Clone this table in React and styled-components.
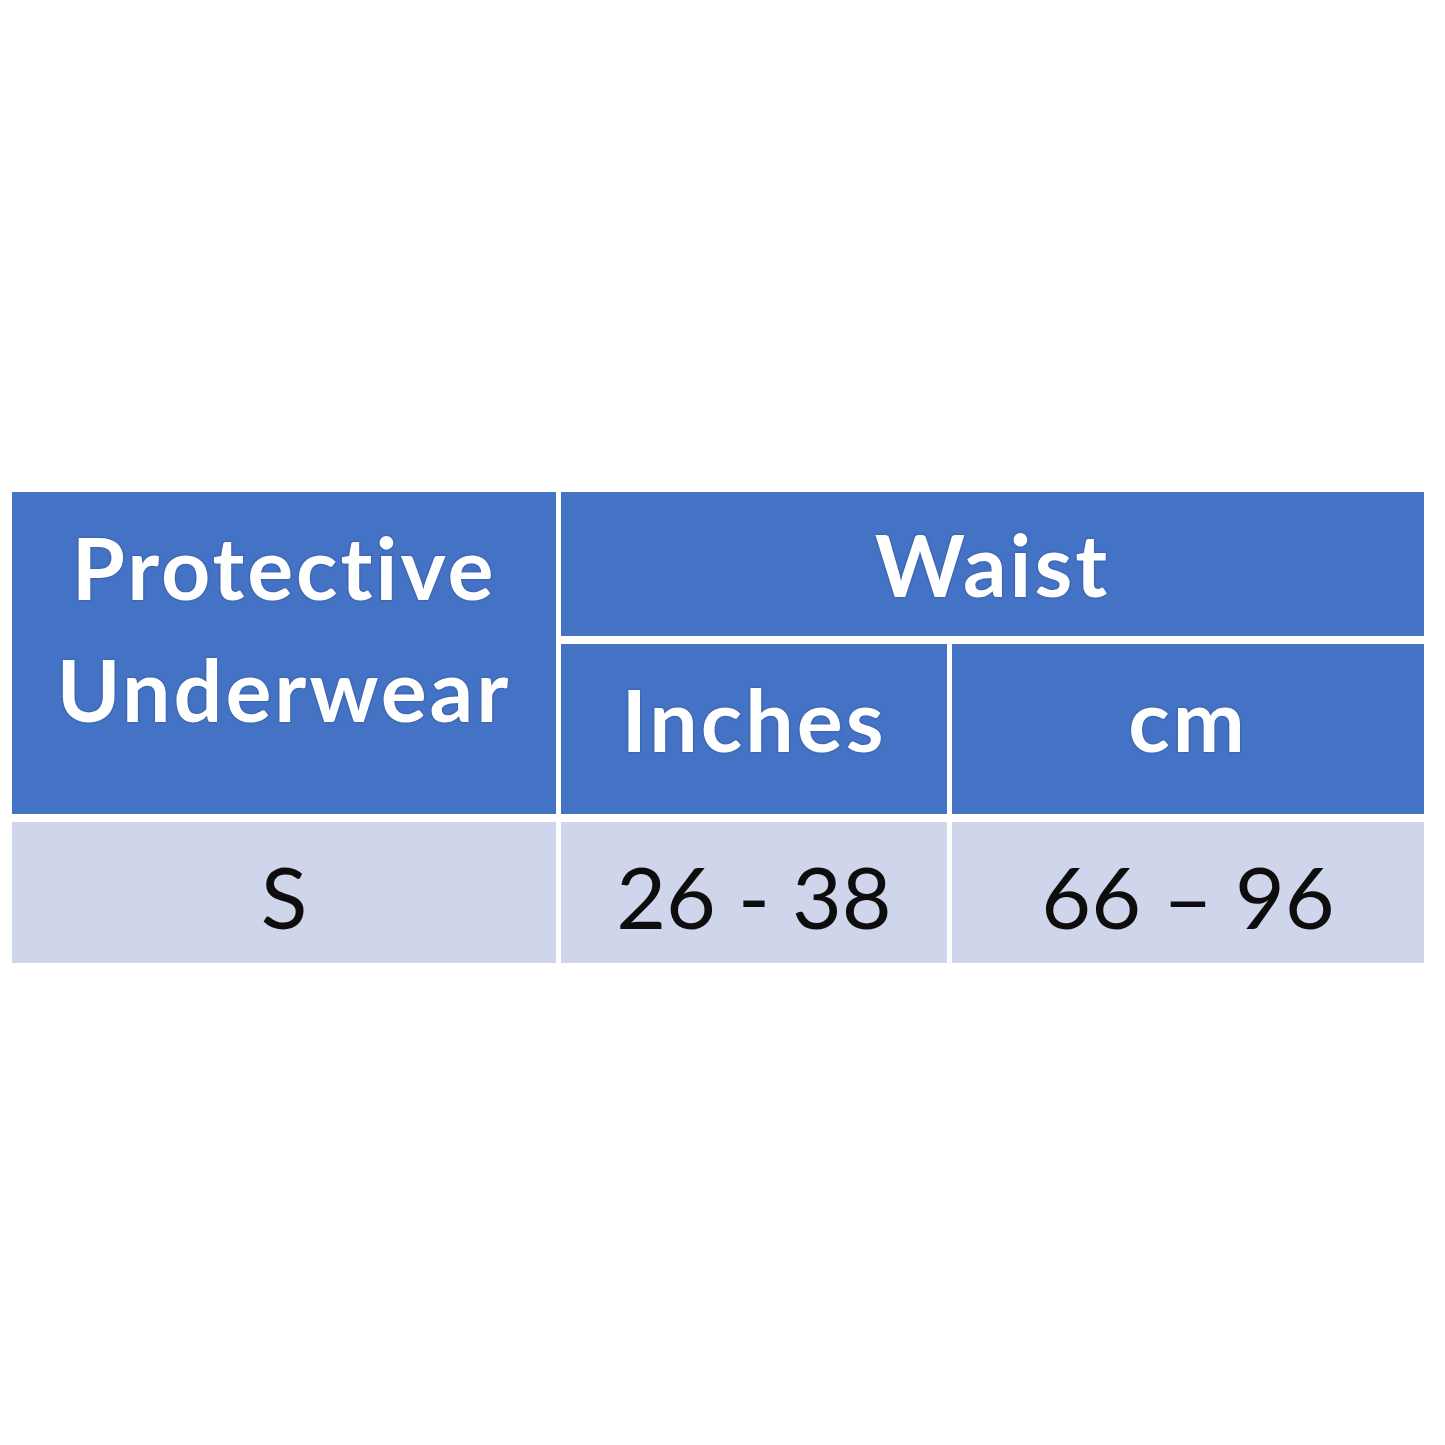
import styled, { createGlobalStyle } from "styled-components";

const GlobalStyle = createGlobalStyle`
  html, body {
    margin: 0;
    padding: 0;
    background: #ffffff;
  }
`;

const Page = styled.div`
  width: 1445px;
  height: 1445px;
  box-sizing: border-box;
  padding: 492px 0 0 12px;
  background: #ffffff;
  font-family: Lato, "Open Sans", "Liberation Sans", sans-serif;
  font-variant-ligatures: none;
`;

const SizeTable = styled.div`
  display: grid;
  grid-template-columns: 544px 386px 472px;
  grid-template-rows: 144px 170px 141px;
  column-gap: 5px;
  row-gap: 8px;
  width: 1412px;
`;

const HeadCell = styled.div`
  background: #4472c4;
  color: #ffffff;
  font-weight: 700;
  font-size: 86px;
  line-height: 122px;
  letter-spacing: 3px;
  display: flex;
  align-items: center;
  justify-content: center;
  text-align: center;
  padding-bottom: ${(p) => p.$lift || 0}px;
  box-sizing: border-box;
  text-shadow: 0 0 2px rgba(20, 40, 90, 0.6);
  grid-column: ${(p) => p.$col || "auto"};
  grid-row: ${(p) => p.$row || "auto"};
`;

const BodyCell = styled.div`
  background: #cfd5ea;
  color: #0d0d0d;
  font-size: 86px;
  display: flex;
  align-items: center;
  justify-content: center;
  padding-top: 6px;
  box-sizing: border-box;
`;

const App = () => {
  return (
    <>
      <GlobalStyle />
      <Page>
        <SizeTable>
          <HeadCell $col="1" $row="1 / span 2" $lift={50}>
            Protective
            <br />
            Underwear
          </HeadCell>
          <HeadCell $col="2 / span 2" $row="1" $lift={0}>
            Waist
          </HeadCell>
          <HeadCell $col="2" $row="2" $lift={20}>
            Inches
          </HeadCell>
          <HeadCell $col="3" $row="2" $lift={20}>
            cm
          </HeadCell>
          <BodyCell>S</BodyCell>
          <BodyCell>26 - 38</BodyCell>
          <BodyCell>66 – 96</BodyCell>
        </SizeTable>
      </Page>
    </>
  );
};

export default App;
